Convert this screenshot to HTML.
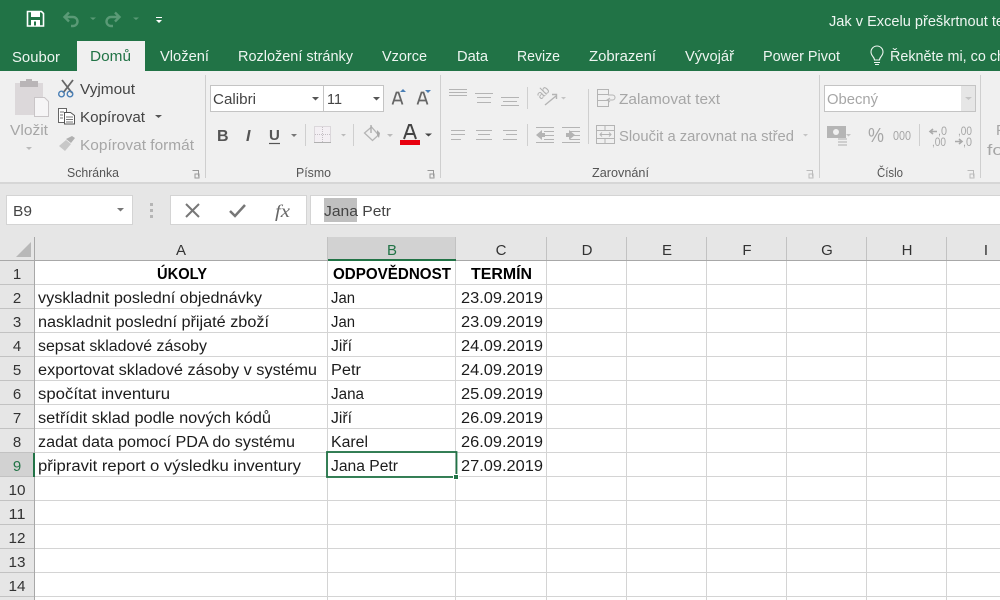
<!DOCTYPE html>
<html><head><meta charset="utf-8"><style>
html,body{margin:0;padding:0;width:1000px;height:600px;overflow:hidden;background:#fff}
svg{display:block}
text{font-family:"Liberation Sans",sans-serif;white-space:pre}
.t{font-size:15px;fill:#eef5f1}
.r{font-size:15px;fill:#444}
.g{font-size:15px;fill:#a6a6a6}
.l{font-size:13px;fill:#555}
.c{font-size:15.5px;fill:#1c1c1c}
.b{font-size:15.5px;fill:#000;font-weight:bold}
.h{font-size:15px;fill:#333;text-anchor:middle}
</style></head><body>
<svg width="1000" height="600" viewBox="0 0 1000 600" xmlns="http://www.w3.org/2000/svg">
<rect width="1000" height="71" fill="#217346"/>
<rect y="71" width="1000" height="111" fill="#f0f0f0"/>
<rect y="182" width="1000" height="2" fill="#d6d6d6"/>
<rect y="184" width="1000" height="53" fill="#e6e6e6"/>
<rect x="77" y="41" width="68" height="30" fill="#f0f0f0"/>

<!-- QAT -->
<path d="M27.500 11.500h14l2 2v12.500h-16z" fill="none" stroke="#fff" stroke-width="1.600"/>
<rect x="31" y="12" width="9" height="5" fill="#fff"/><rect x="31" y="20" width="9" height="6" fill="#fff"/><rect x="34" y="21.500" width="2" height="4" fill="#217346"/>
<path d="M69 12.500l-4.500 4.500 4.500 4.500M65 17h8a4.500 4.500 0 0 1 0 9h-2" fill="none" stroke="#5a9a76" stroke-width="2.400"/>
<path d="M90 17.500h6l-3 2.500z" fill="#5a9a76"/>
<path d="M115 12.500l4.500 4.500-4.500 4.500M119 17h-8a4.500 4.500 0 0 0 0 9h2" fill="none" stroke="#5a9a76" stroke-width="2.400"/>
<path d="M133 17.500h6l-3 2.500z" fill="#5a9a76"/>
<path d="M156 17h6v1h-6zM156 20h6l-3 3z" fill="#fff"/>

<text class="t" x="829" y="26" textLength="175" lengthAdjust="spacingAndGlyphs">Jak v Excelu přeškrtnout te</text>

<!-- tabs -->
<text class="t" x="12" y="62" textLength="48" lengthAdjust="spacingAndGlyphs">Soubor</text>
<text x="90" y="61" font-size="15" fill="#217346" textLength="41" lengthAdjust="spacingAndGlyphs">Domů</text>
<text class="t" x="160" y="61" textLength="49" lengthAdjust="spacingAndGlyphs">Vložení</text>
<text class="t" x="238" y="61" textLength="115" lengthAdjust="spacingAndGlyphs">Rozložení stránky</text>
<text class="t" x="382" y="61" textLength="45" lengthAdjust="spacingAndGlyphs">Vzorce</text>
<text class="t" x="457" y="61" textLength="31" lengthAdjust="spacingAndGlyphs">Data</text>
<text class="t" x="517" y="61" textLength="43" lengthAdjust="spacingAndGlyphs">Revize</text>
<text class="t" x="589" y="61" textLength="67" lengthAdjust="spacingAndGlyphs">Zobrazení</text>
<text class="t" x="685" y="61" textLength="49" lengthAdjust="spacingAndGlyphs">Vývojář</text>
<text class="t" x="763" y="61" textLength="77" lengthAdjust="spacingAndGlyphs">Power Pivot</text>
<text class="t" x="890" y="61" textLength="115" lengthAdjust="spacingAndGlyphs">Řekněte mi, co ch</text>
<path d="M874.500 60c0-3-3.500-4-3.500-8a6 6 0 0 1 12 0c0 4-3.500 5-3.500 8z" fill="none" stroke="#eef5f1" stroke-width="1.100"/>
<path d="M874 62.500h6M875 64.500h4" stroke="#eef5f1" stroke-width="1.100"/>

<!-- separators -->
<g fill="#cfcfcf">
<rect x="205" y="75" width="1" height="103"/><rect x="440" y="75" width="1" height="103"/>
<rect x="819" y="75" width="1" height="103"/><rect x="980" y="75" width="1" height="103"/>
<rect x="527" y="87" width="1" height="22"/><rect x="527" y="124" width="1" height="22"/>
<rect x="588" y="89" width="1" height="55"/><rect x="353" y="124" width="1" height="22"/>
<rect x="305" y="124" width="1" height="22"/><rect x="919" y="124" width="1" height="22"/>
</g>

<!-- clipboard -->
<rect x="15" y="83" width="28" height="32" fill="#dcd8da"/>
<rect x="20" y="81" width="18" height="6" fill="#b9b5b7"/><rect x="26" y="79" width="6" height="4" fill="#b9b5b7"/>
<path d="M34.500 97.500h10l4 4v15h-14z" fill="#f6f5f6" stroke="#c9c5c7"/>
<text class="g" x="10" y="135" textLength="38" lengthAdjust="spacingAndGlyphs">Vložit</text>
<path d="M26 147h6l-3 3z" fill="#bbb"/>

<!-- scissors -->
<path d="M62 80l10 13M73 80l-10 13" stroke="#666" stroke-width="1.800" fill="none"/>
<circle cx="61.500" cy="94" r="2.800" fill="none" stroke="#4a7fb5" stroke-width="1.400"/><circle cx="70" cy="94" r="2.800" fill="none" stroke="#4a7fb5" stroke-width="1.400"/>
<text class="r" x="80" y="94" textLength="55" lengthAdjust="spacingAndGlyphs">Vyjmout</text>
<!-- copy -->
<path d="M58.500 108.500h8v14h-8z" fill="#fff" stroke="#666"/><path d="M64.500 112.500h6l4 3v8.500h-10z" fill="#fff" stroke="#555"/>
<path d="M60 112h4M60 115h3M60 118h3M66 117h7M66 119.500h7M66 122h7" stroke="#777"/>
<text class="r" x="80" y="122" textLength="65" lengthAdjust="spacingAndGlyphs">Kopírovat</text>
<path d="M155 115h7l-3.500 3z" fill="#555"/>
<!-- format painter -->
<path d="M59 146l7-6 5 4-6 7z" fill="#c8c8c8"/><path d="M66 139l6-3 3 2-4 5z" fill="#b0b0b0"/>
<text class="g" x="80" y="150" textLength="114" lengthAdjust="spacingAndGlyphs">Kopírovat formát</text>
<text class="l" x="67" y="177" textLength="52" lengthAdjust="spacingAndGlyphs">Schránka</text>
<path d="M192.500 170.500h6v6M195 174h4v4h-4z" fill="none" stroke="#999"/>
<path d="M427.500 170.500h6v6M430 174h4v4h-4z" fill="none" stroke="#999"/>
<path d="M806.500 170.500h6v6M809 174h4v4h-4z" fill="none" stroke="#bbb"/>
<path d="M967.500 170.500h6v6M970 174h4v4h-4z" fill="none" stroke="#bbb"/>

<!-- font boxes -->
<rect x="210.500" y="85.500" width="113" height="26" fill="#fff" stroke="#c4c4c4"/>
<rect x="323.500" y="85.500" width="60" height="26" fill="#fff" stroke="#c4c4c4"/>
<text class="r" x="213" y="104" textLength="43" lengthAdjust="spacingAndGlyphs">Calibri</text>
<text class="r" x="327" y="104" textLength="15" lengthAdjust="spacingAndGlyphs">11</text>
<path d="M312 97h7l-3.500 3.500zM373 97h7l-3.500 3.500z" fill="#555"/>
<path d="M392.500 104.500l4-12h2l4 12M394.500 100.500h6" fill="none" stroke="#666" stroke-width="1.800"/>
<path d="M400 92l3-3 3 3z" fill="#4a7fb5"/>
<path d="M417.500 104.500l4-12h2l4 12M419.500 100.500h6" fill="none" stroke="#666" stroke-width="1.800"/>
<path d="M425 90h6l-3 3z" fill="#4a7fb5"/>

<text x="217" y="141" font-size="16" font-weight="bold" fill="#555">B</text>
<text x="246" y="141" font-size="16" font-weight="bold" font-style="italic" fill="#555">I</text>
<text x="269" y="140" font-size="15" font-weight="bold" fill="#555">U</text>
<path d="M269 143.500h11" stroke="#555" stroke-width="1.200"/>
<path d="M291 134h6l-3 3z" fill="#777"/>
<rect x="314.500" y="126.500" width="16" height="16" fill="#f3eff3" stroke="#c4bfc4" stroke-dasharray="1 1"/>
<path d="M322.500 127v16M315 134.500h16" stroke="#c4bfc4" stroke-dasharray="1 1"/>
<path d="M314 142.500h17" stroke="#b0b0b0"/>
<path d="M341 134h5l-2.500 2.500z" fill="#bbb"/>
<path d="M364.500 133l7-6 7 8-6 5.500z" fill="none" stroke="#b5b5b5" stroke-width="1.300"/><path d="M371 125v8" stroke="#aaa" stroke-width="1.300"/><path d="M377 130l3 3-1 5-2-3z" fill="#aaa"/>
<path d="M387 134h6l-3 3z" fill="#bbb"/>
<path d="M404 139l5-14h2l5 14M406 134h8" fill="none" stroke="#444" stroke-width="2"/>
<rect x="400" y="140" width="20" height="5" fill="#e8000f"/>
<path d="M425 133.500h7l-3.500 3z" fill="#444"/>
<text class="l" x="296" y="177" textLength="35" lengthAdjust="spacingAndGlyphs">Písmo</text>

<!-- align -->
<g stroke="#b4b4b4" stroke-width="1" fill="none">
<path d="M449 89.500h18M449 92.500h18M449 95.500h18"/>
<path d="M475 93.500h18M477 97.500h14M477 102.500h14"/>
<path d="M501 97.500h18M503 101.500h14M501 105.500h18"/>
<path d="M451 130.500h14M451 134.500h14M451 139.500h10"/>
<path d="M476 130.500h16M478 134.500h12M476 139.500h16"/>
<path d="M503 130.500h14M506 134.500h11M503 139.500h14"/>
<path d="M536 127.500h18M544 131.500h10M544 135.500h10M544 139.500h10M536 142.500h18"/>
<path d="M562 127.500h18M570 131.500h10M570 135.500h10M570 139.500h10M562 142.500h18"/>
<path d="M545 105l11-9M552 94.500h4.500v4.500" stroke-width="1.400"/>
</g>
<text transform="translate(541,100) rotate(-45)" font-size="13" fill="#b0b0b0" textLength="13" lengthAdjust="spacingAndGlyphs">ab</text>
<path d="M536 135l6-5v3h3v4h-3v3zM575 135l-6-5v3h-3v4h3v3z" fill="#b4b4b4"/>
<path d="M561 97h5l-2.500 2.500zM803 134h5l-2.500 2.500zM846 134h5l-2.500 2.500z" fill="#c4c4c4"/>

<g fill="none" stroke="#b4b4b4">
<path d="M597.500 89.500h11v5h-11zM597.500 94.500v12h11v-6M597.500 100.500h10"/>
<path d="M608 95h4.500a2 2 0 0 1 0 5h-4.500M610 98l-3 2 3 2"/>
<rect x="596.500" y="125.500" width="18" height="18"/>
<path d="M596.500 130.500h18M596.500 138.500h18M605 126v4M605 139v4"/>
<path d="M600 134.500h11M602 132.500l-2 2 2 2M609 132.500l2 2-2 2"/>
</g>
<text class="g" x="619" y="104" textLength="101" lengthAdjust="spacingAndGlyphs">Zalamovat text</text>
<text class="g" x="619" y="141" textLength="175" lengthAdjust="spacingAndGlyphs">Sloučit a zarovnat na střed</text>
<text class="l" x="592" y="177" textLength="57" lengthAdjust="spacingAndGlyphs">Zarovnání</text>

<!-- number -->
<rect x="824.500" y="85.500" width="151" height="26" fill="#fff" stroke="#c4c4c4"/>
<rect x="961" y="86" width="14" height="25" fill="#e6e6e6"/>
<path d="M965 97h7l-3.500 3z" fill="#c4c4c4"/>
<text class="g" x="827" y="104" textLength="51" lengthAdjust="spacingAndGlyphs">Obecný</text>
<rect x="827" y="126" width="19" height="12" fill="#b5b5b5"/><circle cx="836" cy="132" r="3" fill="#f0f0f0"/>
<path d="M838 139h9M838 142h9M838 145h9" stroke="#c4c4c4" stroke-width="1.500"/>
<text x="868" y="142" font-size="20" fill="#a6a6a6" textLength="16" lengthAdjust="spacingAndGlyphs">%</text>
<text x="893" y="140" font-size="13" fill="#a6a6a6" textLength="18" lengthAdjust="spacingAndGlyphs">000</text>
<path d="M930 131.500h7M933 129l-3 2.500 3 2.500" stroke="#aaa" stroke-width="1.600" fill="none"/>
<text x="938" y="135" font-size="11.500" fill="#a6a6a6" textLength="9" lengthAdjust="spacingAndGlyphs">,0</text>
<text x="932" y="146" font-size="11.500" fill="#a6a6a6" textLength="14" lengthAdjust="spacingAndGlyphs">,00</text>
<text x="958" y="135" font-size="11.500" fill="#a6a6a6" textLength="14" lengthAdjust="spacingAndGlyphs">,00</text>
<path d="M955 141.500h7M959 139l3 2.500-3 2.500" stroke="#aaa" stroke-width="1.600" fill="none"/>
<text x="963" y="146" font-size="11.500" fill="#a6a6a6" textLength="9" lengthAdjust="spacingAndGlyphs">,0</text>
<text class="l" x="877" y="177" textLength="26" lengthAdjust="spacingAndGlyphs">Číslo</text>
<text class="g" x="996" y="135">P</text>
<text class="g" x="987" y="155" textLength="16" lengthAdjust="spacingAndGlyphs">fo</text>

<!-- formula bar -->
<rect x="6.500" y="195.500" width="126" height="29" fill="#fff" stroke="#d4d4d4"/>
<text class="r" x="13" y="216" textLength="19" lengthAdjust="spacingAndGlyphs">B9</text>
<path d="M117 208h7l-3.500 3.500z" fill="#777"/>
<path d="M150 203h3v3h-3zM150 209h3v3h-3zM150 215h3v3h-3z" fill="#b5b5b5"/>
<rect x="170.500" y="195.500" width="136" height="29" fill="#fff" stroke="#d4d4d4"/>
<rect x="310.500" y="195.500" width="700" height="29" fill="#fff" stroke="#d4d4d4"/>
<path d="M186 204l13 13M199 204l-13 13" stroke="#777" stroke-width="2"/>
<path d="M230 211l5 5 10-11" fill="none" stroke="#777" stroke-width="2.500"/>
<text x="275" y="217" font-size="18" font-style="italic" fill="#666" style="font-family:'Liberation Serif',serif" textLength="15" lengthAdjust="spacingAndGlyphs">fx</text>
<rect x="324" y="198" width="33" height="24" fill="#c0c0c0"/>
<text class="r" x="324" y="216" textLength="67" lengthAdjust="spacingAndGlyphs">Jana Petr</text>

<!-- grid -->
<rect y="237" width="1000" height="24" fill="#e6e6e6"/>
<rect y="237" width="35" height="363" fill="#e6e6e6"/>
<rect x="328" y="237" width="128" height="24" fill="#d2d2d2"/>
<rect x="0" y="453" width="35" height="24" fill="#d2d2d2"/>
<path d="M31 242v15h-15z" fill="#b8b8b8"/>
<g stroke="#d4d4d4" stroke-width="1">
<path d="M35 284.500H1000M35 308.500H1000M35 332.500H1000M35 356.500H1000M35 380.500H1000M35 404.500H1000M35 428.500H1000M35 452.500H1000M35 476.500H1000M35 500.500H1000M35 524.500H1000M35 548.500H1000M35 572.500H1000M35 596.500H1000"/>
<path d="M327.500 261V600M455.500 261V600M546.500 261V600M626.500 261V600M706.500 261V600M786.500 261V600M866.500 261V600M946.500 261V600"/>
</g>
<path d="M327.500 237V260M455.500 237V260M546.500 237V260M626.500 237V260M706.500 237V260M786.500 237V260M866.500 237V260M946.500 237V260" stroke="#c2c2c2"/>
<path d="M0 284.500H34M0 308.500H34M0 332.500H34M0 356.500H34M0 380.500H34M0 404.500H34M0 428.500H34M0 452.500H34M0 476.500H34M0 500.500H34M0 524.500H34M0 548.500H34M0 572.500H34M0 596.500H34" stroke="#c2c2c2"/>
<rect x="0" y="260" width="1000" height="1" fill="#a8a8a8"/>
<rect x="34" y="237" width="1" height="363" fill="#a8a8a8"/>
<rect x="328" y="259" width="128" height="2" fill="#217346"/>
<rect x="33" y="453" width="2" height="24" fill="#217346"/>

<text class="h" x="181" y="255">A</text><text x="392" y="255" class="h" style="fill:#217346">B</text><text class="h" x="501" y="255">C</text><text class="h" x="587" y="255">D</text><text class="h" x="667" y="255">E</text><text class="h" x="747" y="255">F</text><text class="h" x="827" y="255">G</text><text class="h" x="907" y="255">H</text><text class="h" x="986" y="255">I</text>
<text class="h" x="17" y="279">1</text><text class="h" x="17" y="303">2</text><text class="h" x="17" y="327">3</text><text class="h" x="17" y="351">4</text><text class="h" x="17" y="375">5</text><text class="h" x="17" y="399">6</text><text class="h" x="17" y="423">7</text><text class="h" x="17" y="447">8</text><text class="h" x="17" y="471" style="fill:#217346">9</text>
<text class="h" x="17" y="495" textLength="17" lengthAdjust="spacingAndGlyphs">10</text><text class="h" x="17" y="519" textLength="17" lengthAdjust="spacingAndGlyphs">11</text><text class="h" x="17" y="543" textLength="17" lengthAdjust="spacingAndGlyphs">12</text><text class="h" x="17" y="567" textLength="17" lengthAdjust="spacingAndGlyphs">13</text><text class="h" x="17" y="591" textLength="17" lengthAdjust="spacingAndGlyphs">14</text>

<!-- cells -->
<text class="b" x="157" y="279" textLength="50" lengthAdjust="spacingAndGlyphs">ÚKOLY</text>
<text class="b" x="333" y="279" textLength="118" lengthAdjust="spacingAndGlyphs">ODPOVĚDNOST</text>
<text class="b" x="471" y="279" textLength="61" lengthAdjust="spacingAndGlyphs">TERMÍN</text>

<text class="c" x="38" y="303" textLength="224" lengthAdjust="spacingAndGlyphs">vyskladnit poslední objednávky</text>
<text class="c" x="38" y="327" textLength="231" lengthAdjust="spacingAndGlyphs">naskladnit poslední přijaté zboží</text>
<text class="c" x="38" y="351" textLength="169" lengthAdjust="spacingAndGlyphs">sepsat skladové zásoby</text>
<text class="c" x="38" y="375" textLength="279" lengthAdjust="spacingAndGlyphs">exportovat skladové zásoby v systému</text>
<text class="c" x="38" y="399" textLength="132" lengthAdjust="spacingAndGlyphs">spočítat inventuru</text>
<text class="c" x="38" y="423" textLength="233" lengthAdjust="spacingAndGlyphs">setřídit sklad podle nových kódů</text>
<text class="c" x="38" y="447" textLength="257" lengthAdjust="spacingAndGlyphs">zadat data pomocí PDA do systému</text>
<text class="c" x="38" y="471" textLength="263" lengthAdjust="spacingAndGlyphs">připravit report o výsledku inventury</text>

<text class="c" x="331" y="303" textLength="24" lengthAdjust="spacingAndGlyphs">Jan</text>
<text class="c" x="331" y="327" textLength="24" lengthAdjust="spacingAndGlyphs">Jan</text>
<text class="c" x="331" y="351" textLength="21" lengthAdjust="spacingAndGlyphs">Jiří</text>
<text class="c" x="331" y="375" textLength="30" lengthAdjust="spacingAndGlyphs">Petr</text>
<text class="c" x="331" y="399" textLength="33" lengthAdjust="spacingAndGlyphs">Jana</text>
<text class="c" x="331" y="423" textLength="21" lengthAdjust="spacingAndGlyphs">Jiří</text>
<text class="c" x="331" y="447" textLength="37" lengthAdjust="spacingAndGlyphs">Karel</text>
<text class="c" x="331" y="471" textLength="67" lengthAdjust="spacingAndGlyphs">Jana Petr</text>

<text class="c" x="461" y="303" textLength="82" lengthAdjust="spacingAndGlyphs">23.09.2019</text>
<text class="c" x="461" y="327" textLength="82" lengthAdjust="spacingAndGlyphs">23.09.2019</text>
<text class="c" x="461" y="351" textLength="82" lengthAdjust="spacingAndGlyphs">24.09.2019</text>
<text class="c" x="461" y="375" textLength="82" lengthAdjust="spacingAndGlyphs">24.09.2019</text>
<text class="c" x="461" y="399" textLength="82" lengthAdjust="spacingAndGlyphs">25.09.2019</text>
<text class="c" x="461" y="423" textLength="82" lengthAdjust="spacingAndGlyphs">26.09.2019</text>
<text class="c" x="461" y="447" textLength="82" lengthAdjust="spacingAndGlyphs">26.09.2019</text>
<text class="c" x="461" y="471" textLength="82" lengthAdjust="spacingAndGlyphs">27.09.2019</text>

<!-- selection -->
<rect x="327" y="452" width="129.500" height="25" fill="none" stroke="#217346" stroke-width="1.800"/>
<rect x="453" y="474" width="6" height="6" fill="#fff"/>
<rect x="454" y="475" width="4" height="4" fill="#217346"/>
</svg>
</body></html>
